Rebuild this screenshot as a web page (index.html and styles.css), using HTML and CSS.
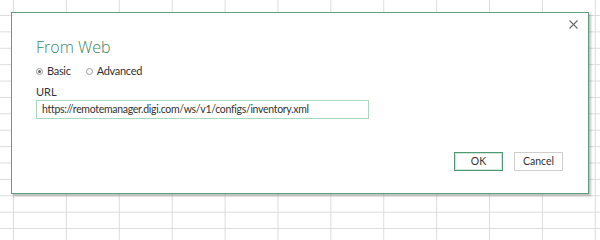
FILE: index.html
```html
<!DOCTYPE html>
<html>
<head>
<meta charset="utf-8">
<link rel="stylesheet" href="styles.css">
</head>
<body>
<div class="sheet">
  <div class="dialog">
    <button class="close" aria-label="Close">
      <svg width="9" height="9" viewBox="0 0 9 9"><path d="M0.5 0.5 L8.5 8.5 M8.5 0.5 L0.5 8.5" stroke="#6b6b6b" stroke-width="1.1" fill="none"/></svg>
    </button>
    <h1 class="title">From Web</h1>
    <div class="radios">
      <label class="radio"><span class="dot checked"></span>Basic</label>
      <label class="radio"><span class="dot"></span>Advanced</label>
    </div>
    <div class="field-label">URL</div>
    <div class="input">https://remotemanager.digi.com/ws/v1/configs/inventory.xml</div>
    <div class="actions">
      <button class="btn primary">OK</button>
      <button class="btn">Cancel</button>
    </div>
  </div>
</div>
</body>
</html>
```
FILE: styles.css
```css
html, body {
  margin: 0;
  padding: 0;
}
body {
  width: 600px;
  height: 208px;
  overflow: hidden;
  background-color: #ffffff;
  background-image:
    linear-gradient(to right, #dcdcdc 1px, transparent 1px),
    linear-gradient(to bottom, #dcdcdc 1px, transparent 1px);
  background-size: 52.9px 16.4px, 52.9px 16.4px;
  background-position: 13px 0, 0 15px;
  font-family: Lato, "Noto Sans", sans-serif;
  color: #333;
}
.sheet {
  padding: 12px 0 0 11px;
}
.dialog {
  position: relative;
  box-sizing: border-box;
  width: 578px;
  height: 182px;
  background: #fff;
  border: 1px solid #5f9e7e;
  box-shadow: 2px 2px 2px rgba(0,0,0,0.25);
  padding: 24px 25px 0 24px;
}
.close {
  position: absolute;
  top: 6px;
  right: 9px;
  width: 11px;
  height: 11px;
  padding: 1px;
  border: 0;
  background: transparent;
  display: flex;
  align-items: center;
  justify-content: center;
}
.title {
  margin: 0;
  font-family: "Open Sans", "Noto Sans", sans-serif;
  font-weight: 300;
  font-size: 16px;
  line-height: 20px;
  color: #3a8765;
}
.radios {
  display: flex;
  gap: 15px;
  margin-top: 7px;
  font-size: 11px;
  letter-spacing: -0.3px;
  line-height: 14px;
  color: #333;
}
.radio {
  display: flex;
  align-items: center;
  gap: 4px;
}
.dot {
  box-sizing: border-box;
  width: 7px;
  height: 7px;
  border: 1px solid #9a9a9a;
  border-radius: 50%;
  display: inline-flex;
  align-items: center;
  justify-content: center;
}
.dot.checked::after {
  content: "";
  width: 3px;
  height: 3px;
  border-radius: 50%;
  background: #666;
}
.field-label {
  margin-top: 7px;
  font-size: 11px;
  line-height: 13px;
  color: #333;
}
.input {
  box-sizing: border-box;
  margin-top: 2px;
  width: 333px;
  height: 19px;
  border: 1px solid #a9d8bf;
  padding: 0 5px;
  font-size: 10.5px;
  letter-spacing: -0.3px;
  line-height: 17px;
  color: #333;
  white-space: nowrap;
}
.actions {
  display: flex;
  justify-content: flex-end;
  gap: 11px;
  margin-top: 33px;
}
.btn {
  box-sizing: border-box;
  width: 49px;
  height: 19px;
  padding: 0;
  background: #fff;
  border: 1px solid #cfcfcf;
  font-family: Lato, "Noto Sans", sans-serif;
  font-size: 10.5px;
  line-height: 17px;
  color: #333;
}
.btn.primary {
  border: 1px solid #4f9a74;
  box-shadow: inset 0 0 0 1px #cfe6d8;
}
```
